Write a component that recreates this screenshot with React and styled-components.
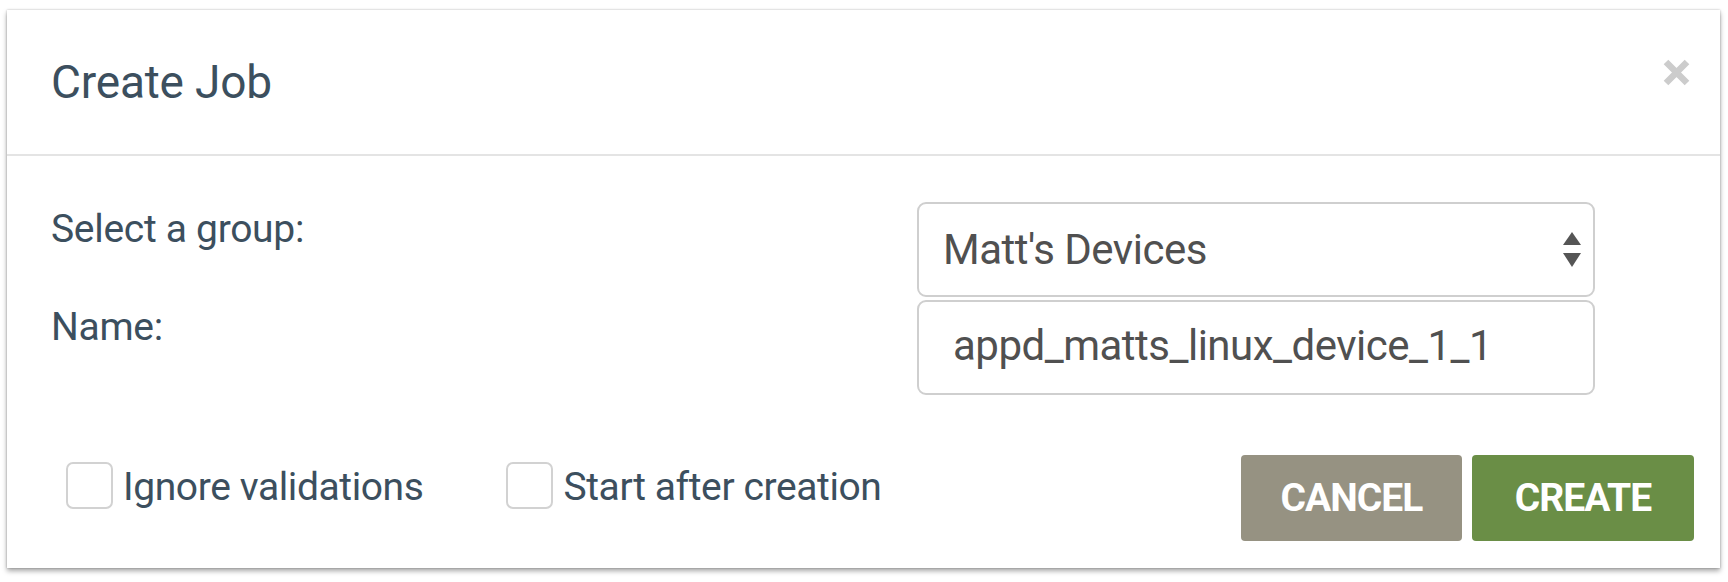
import React from "react";
import styled, { createGlobalStyle } from "styled-components";

const GlobalStyle = createGlobalStyle`
  html, body {
    margin: 0;
    padding: 0;
    background: #ffffff;
  }
  body {
    font-family: Roboto, "Liberation Sans", Arial, sans-serif;
  }
  * { box-sizing: border-box; }
`;

const Page = styled.div`
  padding: 10px 8px 14px 7px;
`;

const Modal = styled.div`
  display: flex;
  flex-direction: column;
  background: #ffffff;
  box-shadow: 0 3px 5px rgba(0, 0, 0, 0.35), 0 0 2px rgba(0, 0, 0, 0.25);
`;

const Header = styled.div`
  display: flex;
  align-items: center;
  justify-content: space-between;
  padding: 0 29px 0 44px;
  border-bottom: 2px solid #e4e4e4;
  height: 146px;
`;

const Title = styled.h1`
  margin: 0;
  font-size: 46px;
  letter-spacing: -0.2px;
  font-weight: 400;
  color: #3c4f5e;
  line-height: 52px;
`;

const CloseButton = styled.button`
  border: 0;
  padding: 0;
  background: transparent;
  width: 29px;
  height: 29px;
  margin-bottom: 20px;
  display: flex;
  cursor: pointer;
`;

const Body = styled.div`
  display: grid;
  grid-template-columns: 1fr 678px;
  row-gap: 3px;
  padding: 46px 125px 0 44px;
`;

const Label = styled.label`
  font-size: 39px;
  letter-spacing: -0.3px;
  line-height: 46px;
  padding-top: 4px;
  color: #3c4f5e;
`;

const fieldBase = `
  height: 95px;
  border: 2px solid #cfcfcf;
  border-radius: 9px;
  background: #ffffff;
  font-family: Roboto, "Liberation Sans", Arial, sans-serif;
  font-size: 42px;
  letter-spacing: -0.5px;
  color: #505050;
`;

const SelectBox = styled.div`
  ${fieldBase}
  display: flex;
  align-items: center;
  justify-content: space-between;
  padding: 0 11px 0 24px;
`;

const TextInput = styled.input`
  ${fieldBase}
  width: 100%;
  padding: 0 0 4px 34px;
  outline: none;
`;

const Footer = styled.div`
  display: flex;
  align-items: flex-start;
  padding: 60px 26px 27px 59px;
`;

const Options = styled.div`
  display: flex;
  align-items: center;
  gap: 83px;
  margin-top: 4px;
  flex: 1;
`;

const CheckOption = styled.label`
  display: flex;
  align-items: center;
  gap: 10px;
  font-size: 39px;
  letter-spacing: -0.4px;
  color: #3c4f5e;
  line-height: 47px;
`;

const OptionText = styled.span`
  padding-top: 5px;
`;

const Box = styled.span`
  width: 47px;
  height: 47px;
  border: 2px solid #d2d2d2;
  border-radius: 7px;
  background: #fff;
  flex: none;
`;

const Actions = styled.div`
  display: flex;
  gap: 10px;
`;

const ActionButton = styled.button`
  width: ${(p) => p.$w}px;
  height: 86px;
  border: 0;
  border-radius: 4px;
  background: ${(p) => p.$bg};
  color: #ffffff;
  font-family: Roboto, "Liberation Sans", Arial, sans-serif;
  font-weight: 700;
  font-size: 39px;
  letter-spacing: -1px;
  text-transform: uppercase;
  padding: 0;
  cursor: pointer;
`;

const CloseIcon = () => (
  <svg width="29" height="29" viewBox="0 0 29 29">
    <path d="M4 4 L25 25 M25 4 L4 25" stroke="#cccccc" strokeWidth="6.5" strokeLinecap="butt" />
  </svg>
);

const SortIcon = () => (
  <svg width="20" height="36" viewBox="0 0 20 36">
    <path d="M10 0 L19 13 L1 13 Z" fill="#555555" />
    <path d="M1 21 L19 21 L10 35 Z" fill="#555555" />
  </svg>
);

export default function App() {
  return (
    <>
      <GlobalStyle />
      <Page>
        <Modal>
          <Header>
            <Title>Create Job</Title>
            <CloseButton aria-label="Close">
              <CloseIcon />
            </CloseButton>
          </Header>
          <Body>
            <Label>Select a group:</Label>
            <SelectBox role="combobox">
              <span>Matt's Devices</span>
              <SortIcon />
            </SelectBox>
            <Label>Name:</Label>
            <TextInput defaultValue="appd_matts_linux_device_1_1" />
          </Body>
          <Footer>
            <Options>
              <CheckOption>
                <Box />
                <OptionText>Ignore validations</OptionText>
              </CheckOption>
              <CheckOption>
                <Box />
                <OptionText>Start after creation</OptionText>
              </CheckOption>
            </Options>
            <Actions>
              <ActionButton $w={221} $bg="#969282">Cancel</ActionButton>
              <ActionButton $w={222} $bg="#6a8e46">Create</ActionButton>
            </Actions>
          </Footer>
        </Modal>
      </Page>
    </>
  );
}
